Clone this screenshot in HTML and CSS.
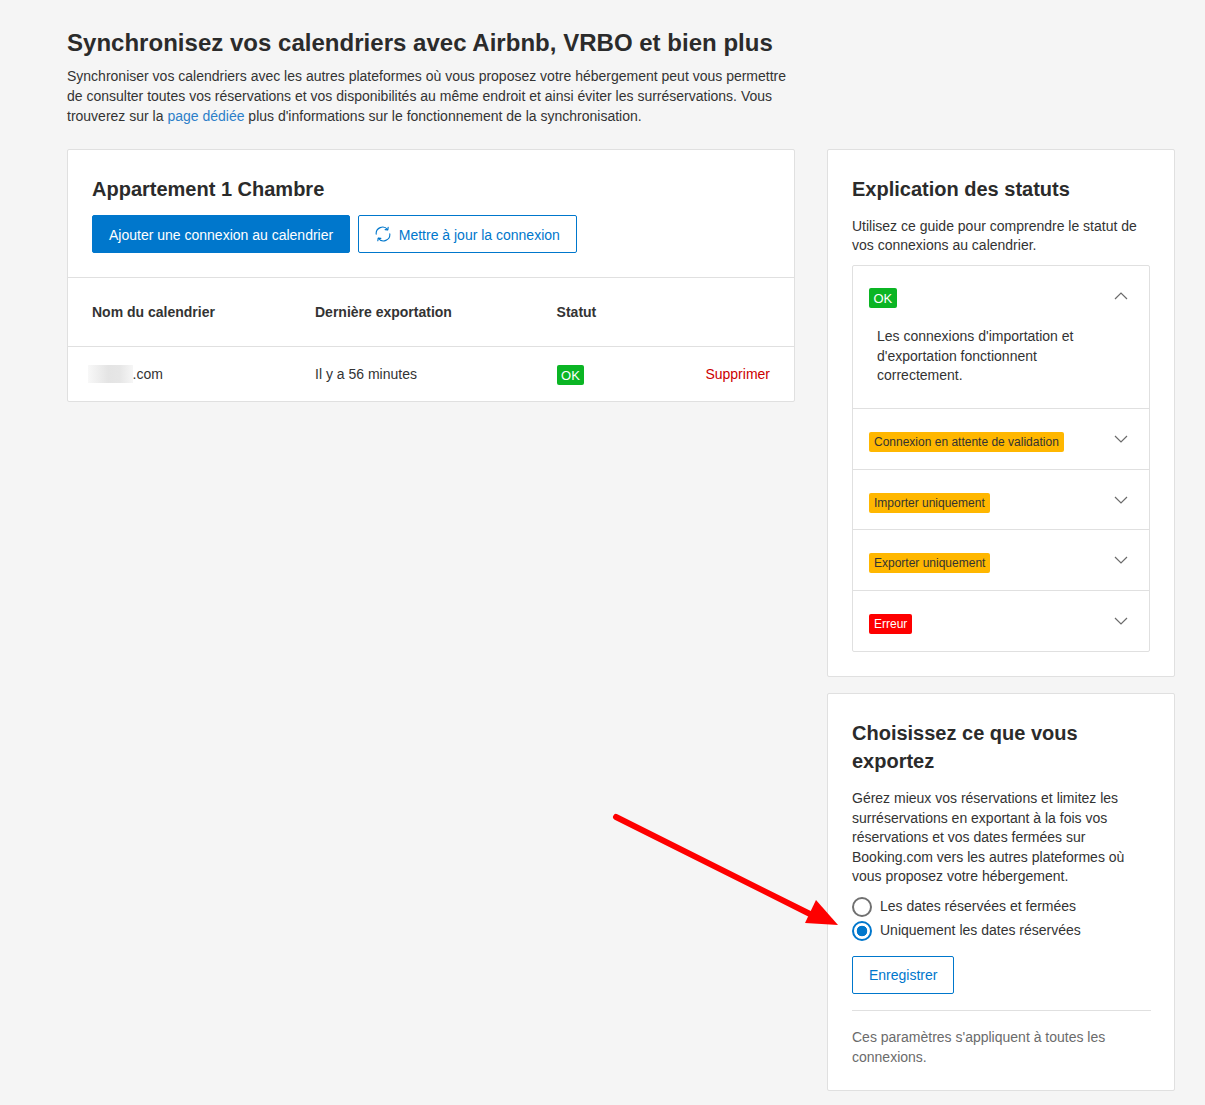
FILE: index.html
```html
<!DOCTYPE html>
<html lang="fr">
<head>
<meta charset="utf-8">
<title>Synchronisez vos calendriers</title>
<link rel="stylesheet" href="styles.css">
</head>
<body>
<main class="page">
  <header class="intro">
    <h1>Synchronisez vos calendriers avec Airbnb, VRBO et bien plus</h1>
    <p>Synchroniser vos calendriers avec les autres plateformes où vous proposez votre hébergement peut vous permettre de consulter toutes vos réservations et vos disponibilités au même endroit et ainsi éviter les surréservations. Vous trouverez sur la <a href="#">page dédiée</a> plus d'informations sur le fonctionnement de la synchronisation.</p>
  </header>
  <div class="columns">
    <section class="card left">
      <div class="left-head">
        <h2>Appartement 1 Chambre</h2>
        <div class="actions">
          <button class="btn primary">Ajouter une connexion au calendrier</button>
          <button class="btn outline">
            <svg class="sync" width="16" height="16" viewBox="0 0 16 16" fill="none" stroke="currentColor" stroke-width="1.1" stroke-linecap="round" stroke-linejoin="round"><path d="M1.2 8.2A6.4 6.4 0 0 1 12.6 3.6"/><path d="M14.8 7.8A6.4 6.4 0 0 1 3.4 12.4"/><path d="M13.2 1.2l-.4 2.7-2.7-.3"/><path d="M2.8 14.8l.4-2.7 2.7.3"/></svg>
            Mettre à jour la connexion
          </button>
        </div>
      </div>
      <div class="row thead">
        <div class="c1">Nom du calendrier</div>
        <div class="c2">Dernière exportation</div>
        <div class="c3">Statut</div>
      </div>
      <div class="row tbody">
        <div class="c1"><span class="blur"></span>.com</div>
        <div class="c2">Il y a 56 minutes</div>
        <div class="c3"><span class="tag ok">OK</span></div>
        <a class="del" href="#">Supprimer</a>
      </div>
    </section>
    <aside class="side">
      <section class="card pad status">
        <h2>Explication des statuts</h2>
        <p class="guide">Utilisez ce guide pour comprendre le statut de vos connexions au calendrier.</p>
        <div class="accordion">
          <div class="acc open">
            <div class="acc-head"><span class="tag ok">OK</span>
              <svg class="chev" width="16" height="16" viewBox="0 0 16 16" fill="none" stroke="#6b6b6b" stroke-width="1.2"><path d="M2 11l6-6 6 6"/></svg></div>
            <p class="acc-body">Les connexions d'importation et d'exportation fonctionnent correctement.</p>
          </div>
          <div class="acc h61"><span class="tag warn">Connexion en attente de validation</span>
            <svg class="chev" width="16" height="16" viewBox="0 0 16 16" fill="none" stroke="#6b6b6b" stroke-width="1.2"><path d="M2 5l6 6 6-6"/></svg></div>
          <div class="acc h60"><span class="tag warn">Importer uniquement</span>
            <svg class="chev" width="16" height="16" viewBox="0 0 16 16" fill="none" stroke="#6b6b6b" stroke-width="1.2"><path d="M2 5l6 6 6-6"/></svg></div>
          <div class="acc h61"><span class="tag warn">Exporter uniquement</span>
            <svg class="chev" width="16" height="16" viewBox="0 0 16 16" fill="none" stroke="#6b6b6b" stroke-width="1.2"><path d="M2 5l6 6 6-6"/></svg></div>
          <div class="acc h61"><span class="tag err">Erreur</span>
            <svg class="chev" width="16" height="16" viewBox="0 0 16 16" fill="none" stroke="#6b6b6b" stroke-width="1.2"><path d="M2 5l6 6 6-6"/></svg></div>
        </div>
      </section>
      <section class="card pad export">
        <h2 class="tall">Choisissez ce que vous exportez</h2>
        <p class="desc">Gérez mieux vos réservations et limitez les surréservations en exportant à la fois vos réservations et vos dates fermées sur Booking.com vers les autres plateformes où vous proposez votre hébergement.</p>
        <div class="radios">
          <label class="radio"><span class="dot"></span>Les dates réservées et fermées</label>
          <label class="radio on"><span class="dot"></span>Uniquement les dates réservées</label>
        </div>
        <button class="btn outline save">Enregistrer</button>
        <p class="note">Ces paramètres s'appliquent à toutes les connexions.</p>
      </section>
    </aside>
  </div>
</main>
<svg class="arrow" width="1205" height="1105" viewBox="0 0 1205 1105"><path d="M616 817L812 915" stroke="#fe0000" stroke-width="6" stroke-linecap="round"/><path d="M816 900L805 923L838 925Z" fill="#fe0000"/></svg>
</body>
</html>
```
FILE: styles.css
```css
* { box-sizing: border-box; }
html, body { margin: 0; }
body {
  background: #f5f5f5;
  color: #333;
  font: 14px/19.6px "Liberation Sans", Arial, sans-serif;
  height: 1105px;
  overflow: hidden;
  position: relative;
}
.page { padding: 28px 30px 0 67px; }
h1 { font-size: 24px; line-height: 30px; margin: 0 0 9.4px; font-weight: 700; letter-spacing: 0.02px; color: #2b2b2b; }
h2 { font-size: 20px; line-height: 28px; margin: 0; font-weight: 700; color: #2b2b2b; }
p { margin: 0; }
a { color: #0077cc; text-decoration: none; }
.intro { width: 728px; }
.intro p a { color: #2c7fc9; }
.columns { display: flex; gap: 32px; align-items: flex-start; margin-top: 22.6px; }
.card { background: #fff; border: 1px solid #e0e0e0; border-radius: 2px; }
.left { width: 728px; }
.left-head { padding: 25px 24px 24px; height: 128px; border-bottom: 1px solid #e0e0e0; }
.actions { display: flex; gap: 8px; margin-top: 12px; }
.btn {
  font: 14px/20px "Liberation Sans", Arial, sans-serif;
  height: 38px;
  border-radius: 2px;
  padding: 0 16px;
  cursor: pointer;
  display: inline-flex;
  align-items: center;
}
.actions .btn { padding-top: 2px; }
.primary { background: #0077cc; color: #fff; border: 1px solid #0077cc; }
.outline { background: #fff; color: #0077cc; border: 1px solid #0077cc; }
.sync { margin-right: 7.6px; margin-top: -2px; }
.row { display: flex; align-items: center; padding: 0 24px; position: relative; }
.thead { height: 69px; font-weight: 700; border-bottom: 1px solid #e0e0e0; padding-top: 2px; }
.tbody { height: 54px; padding-top: 3px; }
.c1 { width: 223px; }
.c2 { width: 241.6px; }
.c3 { width: 100px; }
.blur {
  display: inline-block;
  width: 44.6px;
  height: 18px;
  margin-left: -4px;
  vertical-align: -4px;
  background: linear-gradient(90deg, #f8f8f8, #e4e4e4 45%, #e6e6e6 70%, #f6f6f6);
}
.del { margin-left: auto; color: #cc0000; }
.tag {
  display: inline-block;
  font-size: 12px;
  line-height: 20px;
  height: 20px;
  padding: 0 5px;
  border-radius: 2px;
}
.ok { background: #0bb524; color: #fff; font-size: 13px; padding: 1px 4.5px 0; line-height: 19px; }
.warn { background: #ffb700; color: #333; }
.err { background: #fe0000; color: #fff; }
.side { width: 348px; display: flex; flex-direction: column; gap: 16px; }
.pad { padding: 25px 24px 24px; }
.status { height: 528px; }
.guide { margin-top: 14px; }
.accordion { border: 1px solid #e0e0e0; border-radius: 2px; width: 298px; margin-top: 9px; }
.acc { padding: 0 16px; }
.acc + .acc { border-top: 1px solid #e0e0e0; }
.acc-head { display: flex; justify-content: space-between; height: 70px; padding-top: 22px; }
.acc-head .chev { margin-right: 4px; }
.acc-body { padding: 0 8px 14px; height: 81px; margin-top: -9px; }
.acc .chev { flex: none; }
.h60, .h61 { display: flex; justify-content: space-between; padding-top: 23px; }
.h61 { height: 61px; }
.h60 { height: 60px; }
.h60 .chev, .h61 .chev { margin-right: 4px; margin-top: -1px; }
.export { height: 398px; }
.desc { margin-top: 14.3px; }
.radios { margin-top: 7.7px; }
.radio { display: flex; align-items: center; height: 24px; color: #333; }
.dot {
  width: 20px;
  height: 20px;
  border: 2px solid #707070;
  border-radius: 50%;
  margin-right: 8px;
  background: #fff;
  flex: none;
}
.on .dot {
  border-color: #0077cc;
  background: radial-gradient(circle closest-side, #0077cc 0 5px, #fff 5.6px);
}
.save { margin-top: 13px; display: flex; }
.note { color: #6b6b6b; border-top: 1px solid #e0e0e0; margin-top: 16px; padding-top: 17.4px; width: 299px; }
.arrow { position: absolute; left: 0; top: 0; pointer-events: none; }
```
